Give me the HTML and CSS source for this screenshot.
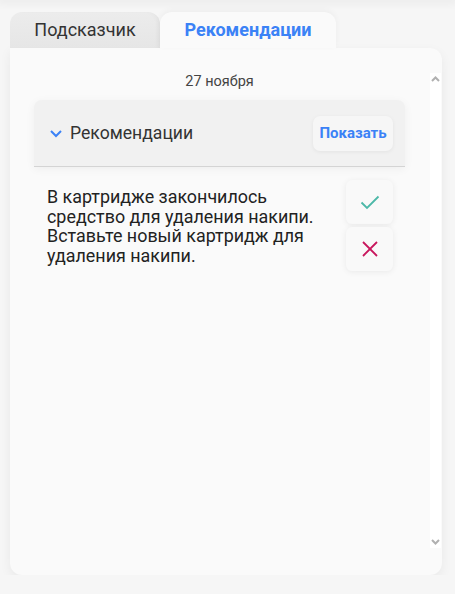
FILE: index.html
```html
<!DOCTYPE html>
<html lang="ru">
<head>
  <meta charset="UTF-8" />
  <meta name="viewport" content="width=device-width, initial-scale=1.0"/>
  <title>Рекомендации</title>
  <link rel="stylesheet" href="styles.css">
</head>
<body>

<div class="topbar"></div>

<div class="page">
  <!-- Tabs -->
  <div class="tabs">
    <div class="tab">Подсказчик</div>
    <div class="tab active">Рекомендации</div>
  </div>

  <div class="panel">
    <div class="feed">
      <div class="date">27 ноября</div>

      <div class="rec-card">
        <div class="rec-header">
          <svg class="chevron" width="14" height="10" viewBox="0 0 14 10">
            <path d="M2 3 L7 8 L12 3" fill="none" stroke="#3b82f6" stroke-width="2"/>
          </svg>
          <div class="rec-title">Рекомендации</div>
          <button class="btn-show">Показать</button>
        </div>

        <div class="rec-body">
          <div class="rec-text">В картридже закончилось средство для удаления накипи. Вставьте новый картридж для удаления накипи.</div>
          <div class="rec-actions">
            <button class="btn-action">
              <svg width="20" height="16" viewBox="0 0 20 16">
                <path d="M1.5 8.5 L7 14 L18.5 2.5" fill="none" stroke="#4cb8a8" stroke-width="1.8"/>
              </svg>
            </button>
            <button class="btn-action">
              <svg width="18" height="18" viewBox="0 0 18 18">
                <path d="M2 2 L16 16 M16 2 L2 16" fill="none" stroke="#c8175d" stroke-width="1.8"/>
              </svg>
            </button>
          </div>
        </div>
      </div>
    </div>

    <div class="scrollbar">
      <svg width="11" height="8" viewBox="0 0 11 8">
        <path d="M2 6 L5.5 2.5 L9 6" fill="none" stroke="#b0b0b0" stroke-width="2"/>
      </svg>
      <svg width="11" height="8" viewBox="0 0 11 8">
        <path d="M2 2 L5.5 5.5 L9 2" fill="none" stroke="#b0b0b0" stroke-width="2"/>
      </svg>
    </div>
  </div>
</div>

</body>
</html>
```

FILE: styles.css
```css
body {
  margin: 0;
  font-family: Roboto, "Noto Sans", sans-serif;
  background: #f6f6f6;
  color: #222;
}

.topbar {
  height: 0;
  box-shadow: 0 0 8px 3px rgba(0, 0, 0, 0.06);
}

.page {
  padding: 12px 13px 0 10px;
}

/* Tabs */
.tabs {
  display: flex;
  height: 36px;
}

.tab {
  width: 150px;
  display: flex;
  justify-content: center;
  align-items: center;
  padding-bottom: 2px;
  box-sizing: border-box;
  font-size: 18px;
  color: #333;
  background: linear-gradient(to bottom, #ececec, #e6e6e6);
  border-radius: 12px 12px 0 0;
  box-shadow: inset -4px 0 6px -4px rgba(0, 0, 0, 0.06);
}

.tab.active {
  width: 176px;
  background: #fafafa;
  color: #3b82f6;
  font-weight: bold;
  box-shadow: 0 -2px 6px rgba(0, 0, 0, 0.04);
}

.panel {
  display: flex;
  height: 527px;
  background: #fafafa;
  border-radius: 0 12px 12px 12px;
  box-shadow: 0 4px 12px rgba(0, 0, 0, 0.06);
}

.feed {
  flex: 1;
  padding: 24px 25px 0 24px;
}

.date {
  text-align: center;
  font-size: 14.5px;
  line-height: 19px;
  color: #444;
  margin-bottom: 9px;
}

.rec-header {
  display: flex;
  align-items: center;
  height: 66px;
  padding: 0 12px 0 15px;
  background: #f1f1f1;
  border-radius: 8px 8px 0 0;
  border-bottom: 1px solid #d4d4d4;
  box-shadow: 0 2px 10px rgba(0, 0, 0, 0.05);
}

.chevron {
  margin-right: 7px;
}

.rec-title {
  flex: 1;
  font-size: 17.6px;
  color: #333;
}

.btn-show {
  width: 80px;
  height: 35px;
  border: none;
  border-radius: 7px;
  background: #f6f6f6;
  box-shadow: 0 1px 4px rgba(0, 0, 0, 0.06);
  font-family: Roboto, sans-serif;
  font-size: 15px;
  font-weight: bold;
  color: #3b82f6;
  padding: 0;
}

.rec-body {
  display: flex;
  justify-content: space-between;
  padding: 13px 12px 0 13px;
}

.rec-text {
  width: 285px;
  padding-top: 7px;
  font-size: 17.9px;
  line-height: 19.7px;
  color: #222;
}

.rec-actions {
  display: flex;
  flex-direction: column;
  gap: 3px;
}

.btn-action {
  width: 47px;
  height: 44px;
  border: none;
  border-radius: 6px;
  background: #f9f9f9;
  box-shadow: 0 1px 6px rgba(0, 0, 0, 0.07);
  display: flex;
  justify-content: center;
  align-items: center;
  padding: 0;
}

.scrollbar {
  width: 11px;
  margin: 25px 1px 27px 0;
  background: #ffffff;
  display: flex;
  flex-direction: column;
  justify-content: space-between;
  padding: 2px 0;
}
```
